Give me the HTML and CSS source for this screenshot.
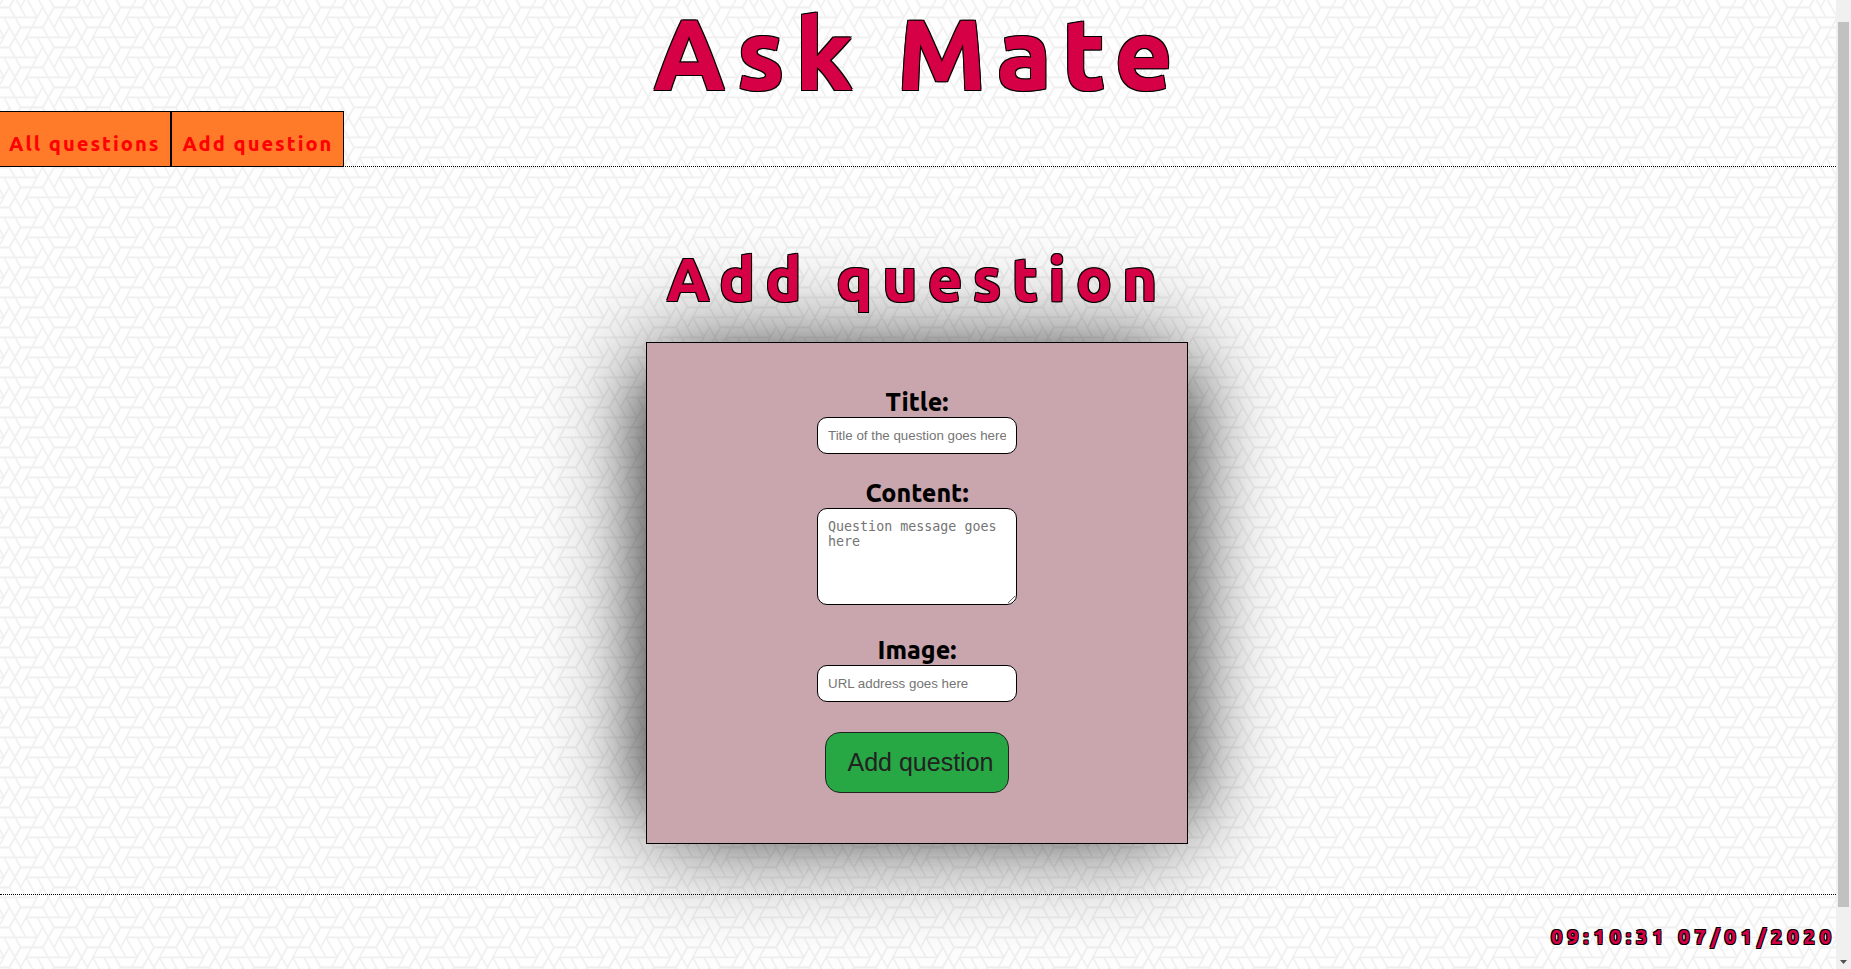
FILE: index.html
```
<!DOCTYPE html>
<html lang="en">
<head>
<meta charset="utf-8">
<title>Ask Mate</title>
<link rel="stylesheet" href="styles.css">
</head>
<body>
<header>
  <h1 class="site-title">Ask Mate</h1>
  <nav class="nav">
    <a class="nav-link" href="#all">All questions</a>
    <a class="nav-link" href="#add">Add question</a>
  </nav>
</header>
<main class="main">
  <h2 class="page-title">Add question</h2>
  <form class="form">
    <div class="field">
      <label class="label" for="title">Title:</label>
      <input class="control" id="title" type="text" placeholder="Title of the question goes here">
    </div>
    <div class="field field-message">
      <label class="label" for="content">Content:</label>
      <textarea class="control message" id="content" placeholder="Question message goes here"></textarea>
    </div>
    <div class="field">
      <label class="label" for="image">Image:</label>
      <input class="control" id="image" type="text" placeholder="URL address goes here">
    </div>
    <button class="submit" type="submit">Add question</button>
  </form>
</main>
<footer class="footer">
  <time class="clock" datetime="2020-01-07T09:10:31">09:10:31 07/01/2020</time>
</footer>
<div class="scrollbar" aria-hidden="true">
  <div class="thumb"></div>
  <svg class="arrow" width="7" height="4" viewBox="0 0 7 4"><path d="M0 0H7L3.5 4Z" fill="#505050"/></svg>
</div>
</body>
</html>
```
FILE: styles.css
```
* {
  box-sizing: border-box;
}

html {
  overflow: hidden;
}

body {
  margin: 0;
  min-height: 100vh;
  padding-right: 15px;
  font-family: Ubuntu, "Open Sans", "Noto Sans", sans-serif;
  background: #fefefe url("data:image/svg+xml,%3Csvg xmlns='http://www.w3.org/2000/svg' width='200' height='40' viewBox='0 0 600 120'%3E%3Cdefs%3E%3Cg id='b'%3E%3Cpath d='M-33 -60H33L67 0L33 60H-33M-33 -60L-67 0M-17 -30H50M17 30H-50M-17 -30L17 30M17 -30L50 30M-17 30L-50 -30M33 0L0 60M-33 0L0 -60'/%3E%3C/g%3E%3Cg id='r'%3E%3Cuse href='%23b' x='-105' y='22'/%3E%3Cuse href='%23b' x='95' y='22'/%3E%3Cuse href='%23b' x='295' y='22'/%3E%3Cuse href='%23b' x='495' y='22'/%3E%3Cuse href='%23b' x='-5' y='82'/%3E%3Cuse href='%23b' x='195' y='82'/%3E%3Cuse href='%23b' x='395' y='82'/%3E%3Cuse href='%23b' x='595' y='82'/%3E%3C/g%3E%3C/defs%3E%3Cg fill='none' stroke='%23f0f0f0' stroke-width='5'%3E%3Cuse href='%23r'/%3E%3Cuse href='%23r' y='-120'/%3E%3Cuse href='%23r' y='120'/%3E%3C/g%3E%3C/svg%3E");
}

.site-title,
.page-title,
.clock {
  color: #d50045;
  font-weight: 900;
  text-shadow: -1px -1px #000, 1px -1px #000, -1px 1px #000, 1px 1px #000;
}

.site-title {
  margin: 0 0 4px;
  font-size: 100px;
  line-height: 107px;
  letter-spacing: 10px;
  text-align: center;
}

.nav {
  display: flex;
  border-bottom: 1px dotted #000;
}

.nav-link {
  margin-bottom: -1px;
  padding: 18px 10px 8px;
  border: 1px solid #000;
  background: #ff7b29;
  color: #f00;
  font-size: 20px;
  font-weight: 900;
  line-height: 28px;
  letter-spacing: 2px;
  text-decoration: none;
}

.nav-link:first-child {
  margin-left: -2px;
}

.main {
  display: flex;
  flex-direction: column;
  align-items: center;
  padding: 71px 2px 50px 0;
}

.page-title {
  position: relative;
  z-index: 1;
  margin: 0 0 22px;
  font-size: 60px;
  line-height: 82px;
  letter-spacing: 10px;
}

.form {
  display: flex;
  flex-direction: column;
  align-items: center;
  width: 542px;
  max-width: 100%;
  padding: 44px 20px 50px;
  border: 1px solid #000;
  background: #c9a5ad;
  box-shadow:
    0 0 100px rgba(0, 0, 0, 0.6),
    -40px 0 60px -40px rgba(0, 0, 0, 0.5),
    40px 0 60px -40px rgba(0, 0, 0, 0.5);
}

.field {
  display: flex;
  flex-direction: column;
  align-items: center;
  margin-bottom: 24px;
}

.field-message {
  margin-bottom: 30px;
}

.label {
  font-size: 25px;
  font-weight: 900;
  line-height: 30px;
}

.control {
  width: 200px;
  height: 37px;
  padding: 10px;
  border: 1px solid #000;
  border-radius: 10px;
  background: #fff;
  font: 13.333px "Liberation Sans", Arial, sans-serif;
}

.control::placeholder {
  color: #757575;
}

.message {
  height: 97px;
  font-family: "DejaVu Sans Mono", monospace;
  line-height: 15px;
}

.submit {
  margin-top: 6px;
  padding: 15px 15px 15px 22px;
  border: 1px solid #222;
  border-radius: 15px;
  background: #28a745;
  color: #222;
  font: 25px/29px "Liberation Sans", Arial, sans-serif;
}

.footer {
  padding-top: 28px;
  border-top: 1px dotted #000;
  text-align: right;
}

.clock {
  font-size: 20px;
  line-height: 28px;
  letter-spacing: 5px;
}

.scrollbar {
  position: fixed;
  top: 0;
  right: 0;
  bottom: 0;
  display: flex;
  flex-direction: column;
  align-items: center;
  justify-content: space-between;
  width: 15px;
  padding: 22px 0 5px;
  background: #f0f0f0;
}

.thumb {
  width: 11px;
  height: 94%;
  background: #c1c1c1;
}

.arrow {
  display: block;
}
```
